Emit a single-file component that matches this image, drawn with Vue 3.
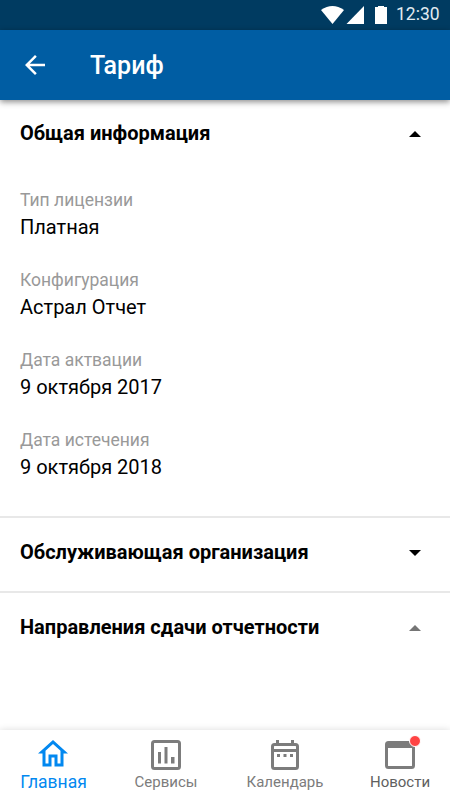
<script setup>
import { ref } from 'vue'

const details = [
  { label: 'Тип лицензии', value: 'Платная' },
  { label: 'Конфигурация', value: 'Астрал Отчет' },
  { label: 'Дата актвации', value: '9 октября 2017' },
  { label: 'Дата истечения', value: '9 октября 2018' },
]
const tabs = [
  { id: 'home', label: 'Главная' },
  { id: 'services', label: 'Сервисы' },
  { id: 'calendar', label: 'Календарь' },
  { id: 'news', label: 'Новости' },
]
const active = ref('home')
</script>

<template>
  <div class="screen">
    <div class="status">
      <svg class="signals" width="67" height="20" viewBox="0 0 67 20" fill="#fff">
        <path d="M0 5Q11.500 -3 23 5L11.500 19Z" />
        <path d="M25.500 19L43 1V19Z" />
        <path d="M54 2H57V1H63V2H66V19H54Z" />
      </svg>
      <span class="clock">12:30</span>
    </div>
    <header class="appbar">
      <svg class="back" width="30" height="30" viewBox="0 0 24 24" fill="#fff">
        <path d="M20 11H7.830l5.590-5.590L12 4l-8 8 8 8 1.410-1.410L7.830 13H20v-2z" />
      </svg>
      <h1>Тариф</h1>
    </header>

    <main class="content">
      <section class="general">
        <div class="heading">
          <h2>Общая информация</h2>
          <svg class="caret" width="12" height="6" viewBox="0 0 12 6"><path d="M0 6L6 0L12 6Z" /></svg>
        </div>
        <dl>
          <div v-for="item in details" :key="item.label" class="entry">
            <dt>{{ item.label }}</dt>
            <dd>{{ item.value }}</dd>
          </div>
        </dl>
      </section>
      <section class="heading divided">
        <h2>Обслуживающая организация</h2>
        <svg class="caret" width="12" height="6" viewBox="0 0 12 6"><path d="M0 0H12L6 6Z" /></svg>
      </section>
      <section class="heading divided">
        <h2>Направления сдачи отчетности</h2>
        <svg class="caret muted" width="12" height="6" viewBox="0 0 12 6"><path d="M0 6L6 0L12 6Z" /></svg>
      </section>
    </main>

    <nav class="tabs">
      <a v-for="tab in tabs" :key="tab.id" :class="['tab', tab.id, { active: tab.id === active }]" @click="active = tab.id">
        <svg v-if="tab.id === 'home'" class="icon" width="30" height="30" viewBox="0 0 30 30">
          <path fill-rule="evenodd" d="M15 0L0 13.500H4.500V26.500H13.500V17.500H16.500V26.500H25.500V13.500H30ZM15 4L22.500 10.800V23.500H19.500V14.500H10.500V23.500H7.500V10.800Z" />
        </svg>
        <svg v-else-if="tab.id === 'services'" class="icon" width="30" height="30" viewBox="0 0 30 30">
          <rect x="1.500" y="1.500" width="27" height="27" rx="2" fill="none" stroke="currentColor" stroke-width="3" />
          <path d="M7 12H10V23.500H7ZM13.500 7H16.500V23.500H13.500ZM20 17H23.500V23.500H20Z" />
        </svg>
        <svg v-else-if="tab.id === 'calendar'" class="icon" width="30" height="30" viewBox="0 0 30 30">
          <rect x="2.500" y="4.500" width="25" height="24" rx="2" fill="none" stroke="currentColor" stroke-width="3" />
          <path d="M6 0H9V4H6ZM21 0H24V4H21ZM3 9H27V12H3ZM7 14H10V17H7ZM13.500 14H16.500V17H13.500ZM20 14H23V17H20Z" />
        </svg>
        <svg v-else class="icon" width="30" height="30" viewBox="0 0 30 30">
          <rect x="1.500" y="2.500" width="27" height="25" rx="2" fill="none" stroke="currentColor" stroke-width="3" />
          <path d="M2 3H28V8H2Z" />
        </svg>
        <span v-if="tab.id === 'news'" class="badge"></span>
        <span class="label">{{ tab.label }}</span>
      </a>
    </nav>
  </div>
</template>

<style>
body {
  margin: 0;
}
</style>

<style scoped>
.screen {
  display: flex;
  flex-direction: column;
  width: 450px;
  height: 800px;
  overflow: hidden;
  background: #fff;
  color: #000;
  font-family: Roboto, sans-serif;
}
.status {
  display: flex;
  flex: none;
  justify-content: flex-end;
  box-sizing: border-box;
  height: 30px;
  padding: 5px 10px 0 0;
  background: #003b61;
}
.clock {
  width: 44px;
  margin-left: 8px;
  color: #e2ebf1;
  font-size: 17.5px;
  line-height: 19px;
}
.appbar {
  z-index: 1;
  display: flex;
  flex: none;
  align-items: center;
  height: 70px;
  padding-left: 20px;
  background: #005da3;
  box-shadow: 0 2px 6px rgba(0, 0, 0, 0.45);
}
h1 {
  margin: 0 0 0 40px;
  padding-top: 2px;
  color: #fff;
  font-size: 25px;
  font-weight: 500;
  line-height: 30px;
}
.content {
  flex: 1;
}
.general {
  height: 416px;
}
.heading {
  display: flex;
  align-items: center;
  justify-content: space-between;
  height: 68px;
  padding: 0 29px 0 20px;
}
h2 {
  margin: 0;
  padding-bottom: 2px;
  font-size: 20px;
  font-weight: 700;
  line-height: 24px;
}
.divided {
  height: 69px;
  padding-bottom: 4px;
  border-top: 2px solid #e8e8e8;
}
.caret {
  fill: #000;
}
.caret.muted {
  fill: #757575;
}
dl {
  margin: 0;
  padding: 20px 20px 0;
}
.entry {
  height: 80px;
}
dt {
  color: #999;
  font-size: 17.5px;
  line-height: 25px;
}
dd {
  margin: 0;
  font-size: 20px;
  line-height: 28px;
}
.tabs {
  display: flex;
  flex: none;
  height: 70px;
  box-shadow: 0 0 7px rgba(0, 0, 0, 0.14);
}
.tab {
  position: relative;
  display: flex;
  flex: none;
  flex-direction: column;
  align-items: center;
  box-sizing: border-box;
  width: 118px;
  padding-top: 10px;
  color: #7c7c7c;
  font-size: 15px;
}
.home {
  width: 106px;
}
.services {
  width: 120px;
}
.news {
  width: 106px;
  padding-left: 6px;
}
.active {
  color: #0288f0;
  font-size: 17.5px;
}
.icon {
  fill: currentColor;
}
.label {
  line-height: 24px;
}
.home .label {
  padding-left: 1px;
}
.news .label {
  color: #606060;
}
.badge {
  position: absolute;
  top: 5px;
  left: 65px;
  width: 10px;
  height: 10px;
  border: 1px solid #fff;
  border-radius: 50%;
  background: #ff4444;
}
</style>
